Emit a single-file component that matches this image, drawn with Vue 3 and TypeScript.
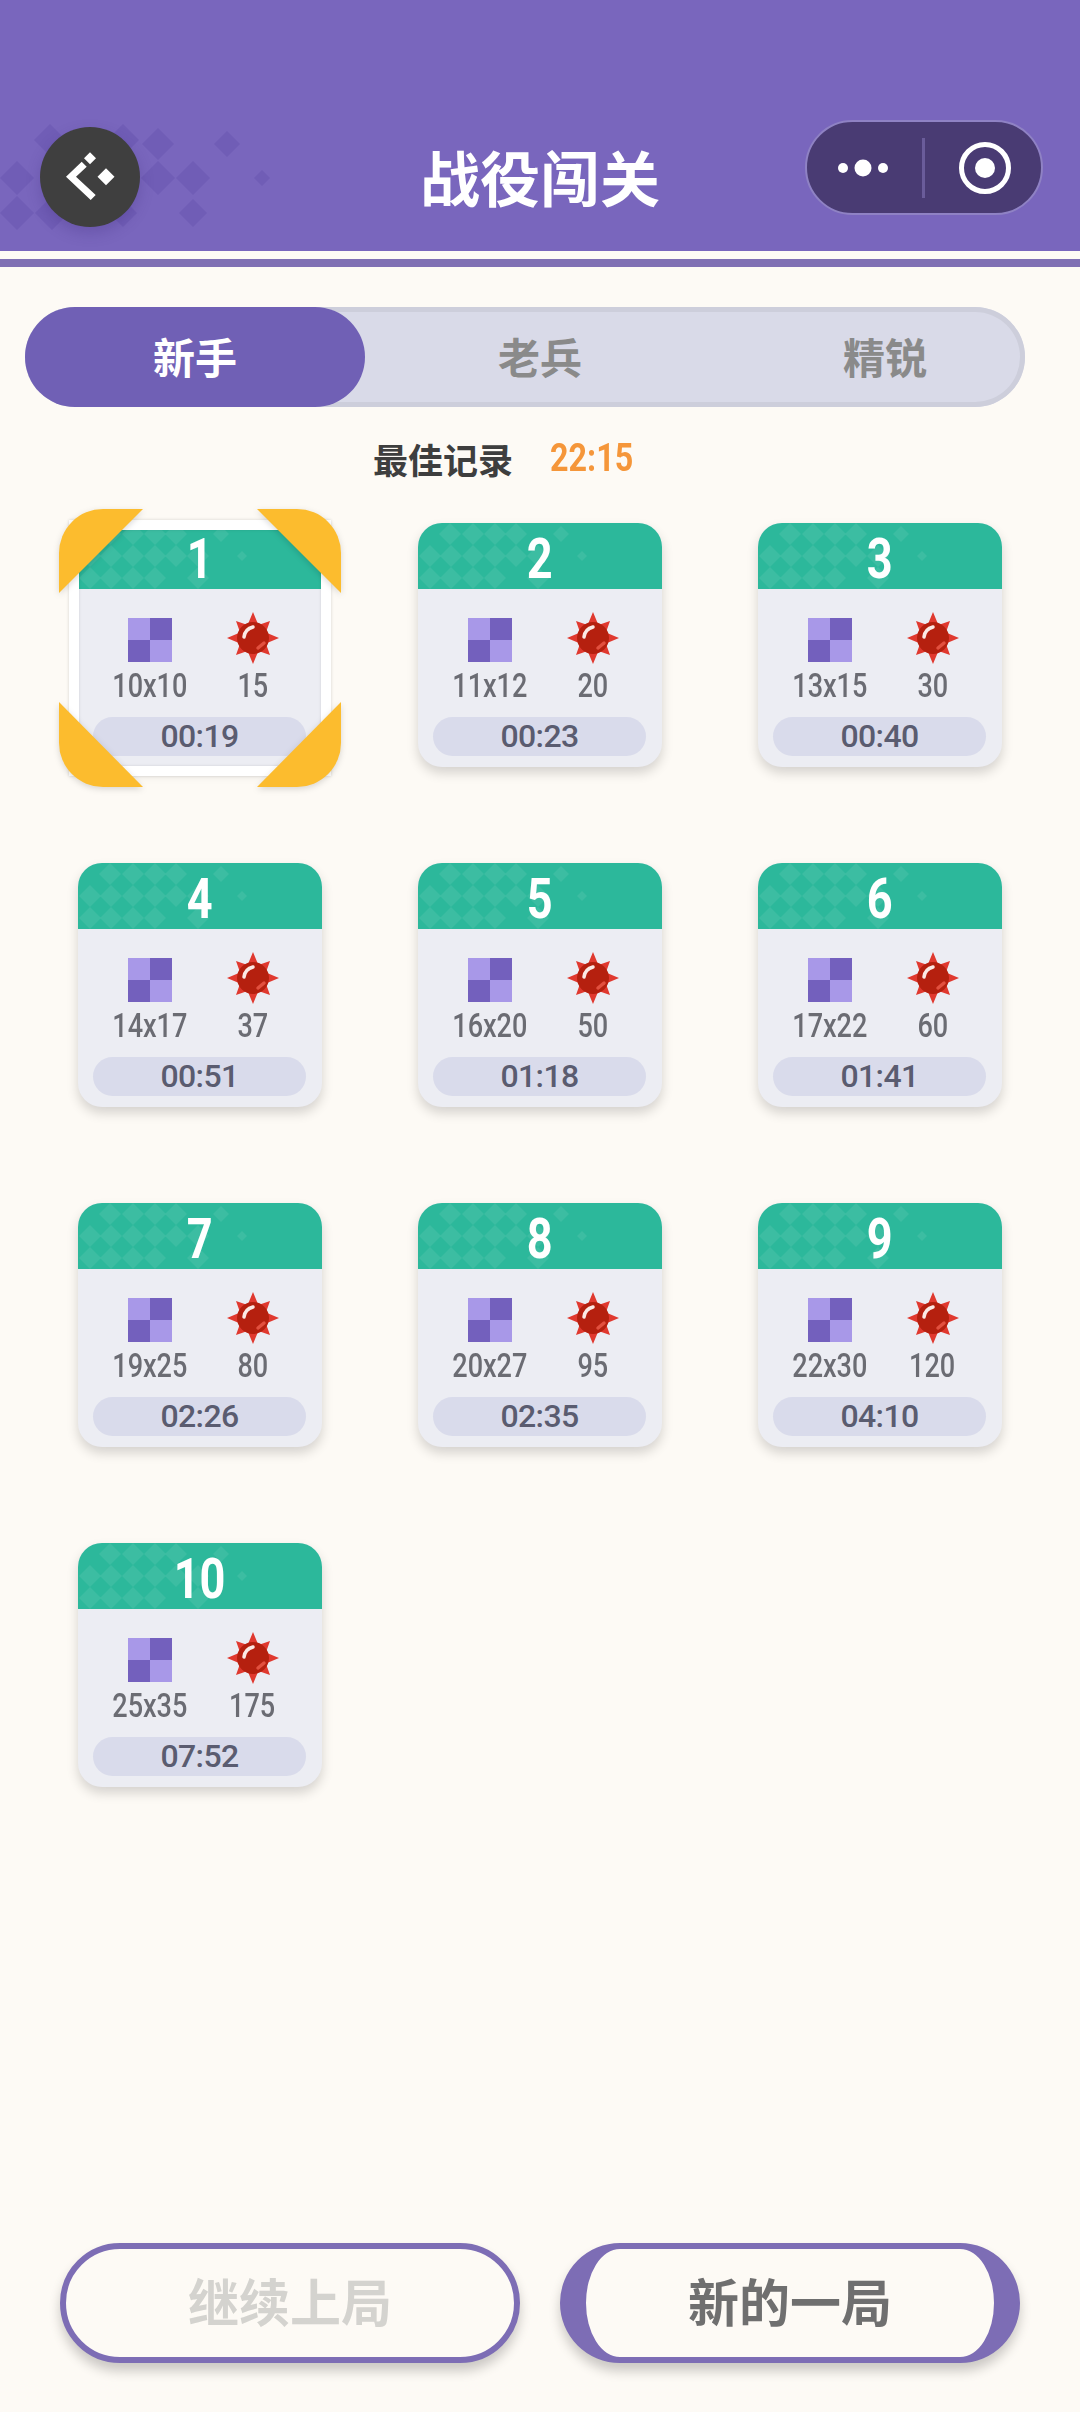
<template>
  <div class="page">
    <header class="top-bar">
      <svg class="top-pattern" width="290" height="130" viewBox="0 0 290 130">
        <polygon
          v-for="(d, i) in topDiamonds"
          :key="i"
          :points="diamond(d[0], d[1], d[2])"
          fill="#6b57b0"
          opacity="0.6"
        />
      </svg>
      <button class="back-btn">
        <svg width="100" height="100" viewBox="0 0 100 100">
          <polygon points="26,49.7 41.7,34.7 46.7,39.7 36,49.7 55.7,68 50.7,73" fill="#fff" />
          <polygon :points="diamond(50, 31.3, 6)" fill="#fff" />
          <polygon :points="diamond(66, 49.7, 8.5)" fill="#fff" />
        </svg>
      </button>
      <h1 class="title">战役闯关</h1>
      <div class="capsule">
        <svg width="80" height="30" viewBox="0 0 80 30">
          <circle cx="17" cy="15" r="5" fill="#fff" />
          <circle cx="37" cy="15" r="8.5" fill="#fff" />
          <circle cx="57" cy="15" r="5" fill="#fff" />
        </svg>
        <span class="capsule-line"></span>
        <svg width="54" height="54" viewBox="0 0 54 54">
          <circle cx="27" cy="27" r="23.5" fill="none" stroke="#fff" stroke-width="5" />
          <circle cx="27" cy="27" r="10" fill="#fff" />
        </svg>
      </div>
    </header>
    <div class="top-stripe"></div>

    <nav class="tabs">
      <div
        v-for="(t, i) in tabs"
        :key="t"
        :class="['tab', { active: i === current }]"
        @click="current = i"
      >
        {{ t }}
      </div>
    </nav>

    <div class="best">
      <span class="best-label">最佳记录</span>
      <span class="best-time">22:15</span>
    </div>

    <section class="levels">
      <div v-for="(lv, i) in levels" :key="lv.no" class="level">
        <div class="level-head">
          <svg class="head-pattern" width="244" height="66" viewBox="0 0 244 66">
            <polygon
              v-for="(d, k) in cardDiamonds"
              :key="k"
              :points="diamond(d[0], d[1], d[2])"
              fill="#fff"
              opacity="0.08"
            />
          </svg>
          <span class="level-no">{{ lv.no }}</span>
        </div>
        <div class="stats">
          <div class="stat">
            <svg width="44" height="44" viewBox="0 -2 44 44">
              <rect width="44" height="44" fill="#a898e8" />
              <rect x="22" width="22" height="22" fill="#7360bd" />
              <rect y="22" width="22" height="22" fill="#7360bd" />
            </svg>
            <span class="stat-text">{{ lv.size }}</span>
          </div>
          <div class="stat">
            <svg width="52" height="52" viewBox="-26 -26 52 52">
              <polygon :points="minePoints" fill="#e0392f" />
              <circle r="16" fill="#b5200f" />
              <path d="M-9 -1 Q-8 -9 0 -11" fill="none" stroke="#fbe9e4" stroke-width="3.5" stroke-linecap="round" />
              <path d="M5 10 L11 5" fill="none" stroke="#e2503f" stroke-width="3.5" stroke-linecap="round" />
            </svg>
            <span class="stat-text">{{ lv.mines }}</span>
          </div>
        </div>
        <div class="level-time">{{ lv.time }}</div>

        <template v-if="i === 0">
          <div class="picked-ring"></div>
          <svg class="picked-corners" width="282" height="278" viewBox="0 0 282 278">
            <path d="M0 84 V44 A44 44 0 0 1 44 0 H84 Z" fill="#fcbc2e" />
            <path d="M198 0 H238 A44 44 0 0 1 282 44 V84 Z" fill="#fcbc2e" />
            <path d="M0 193 L84 278 H44 A44 44 0 0 1 0 234 Z" fill="#fcbc2e" />
            <path d="M282 193 V234 A44 44 0 0 1 238 278 H198 Z" fill="#fcbc2e" />
          </svg>
        </template>
      </div>
    </section>

    <footer class="actions">
      <button class="action resume"><span>继续上局</span></button>
      <button class="action fresh"><span>新的一局</span></button>
    </footer>
  </div>
</template>

<script setup lang="ts">
import { ref } from 'vue'

const tabs = ['新手', '老兵', '精锐']
const current = ref(0)

const levels = [
  { no: 1, size: '10x10', mines: 15, time: '00:19' },
  { no: 2, size: '11x12', mines: 20, time: '00:23' },
  { no: 3, size: '13x15', mines: 30, time: '00:40' },
  { no: 4, size: '14x17', mines: 37, time: '00:51' },
  { no: 5, size: '16x20', mines: 50, time: '01:18' },
  { no: 6, size: '17x22', mines: 60, time: '01:41' },
  { no: 7, size: '19x25', mines: 80, time: '02:26' },
  { no: 8, size: '20x27', mines: 95, time: '02:35' },
  { no: 9, size: '22x30', mines: 120, time: '04:10' },
  { no: 10, size: '25x35', mines: 175, time: '07:52' },
]

const diamond = (x: number, y: number, r: number) =>
  `${x},${y - r} ${x + r},${y} ${x},${y + r} ${x - r},${y}`

// x, y, half size. coordinates start at the top of the screen bar pattern
const topDiamonds = [
  [50, 30, 16], [123, 30, 16], [158, 34, 16], [227, 34, 13],
  [17, 68, 17], [88, 68, 17], [158, 68, 17], [193, 68, 17], [262, 68, 8],
  [17, 103, 17], [52, 103, 17], [123, 103, 14], [193, 103, 14],
]

const cardDiamonds = [
  [32, 11, 11], [55, 11, 11], [77, 11, 11], [98, 11, 11], [143, 11, 8],
  [12, 33, 11], [33, 33, 11], [55, 33, 11], [77, 33, 11], [98, 33, 11], [120, 33, 11], [164, 33, 5],
  [12, 55, 11], [33, 55, 11], [55, 55, 11], [77, 55, 11], [120, 55, 11],
]

// 8 spikes, the straight ones a bit longer than the diagonal ones
const minePoints = Array.from({ length: 16 }, (_, i) => {
  const a = (i * Math.PI) / 8
  const r = i % 2 ? 14 : i % 4 === 0 ? 26 : 24
  return `${(Math.cos(a) * r).toFixed(1)},${(Math.sin(a) * r).toFixed(1)}`
}).join(' ')
</script>

<style>
html,
body {
  background: #fdfaf5;
}
</style>

<style scoped>
.page {
  width: 1080px;
  height: 2412px;
  display: flex;
  flex-direction: column;
  background: #fdfaf5;
  font-family: "Noto Sans CJK SC", "Noto Sans", sans-serif;
  overflow: hidden;
}

.top-bar {
  position: relative;
  height: 251px;
  flex: none;
  box-sizing: border-box;
  padding: 120px 37px 0 40px;
  display: flex;
  align-items: flex-start;
  justify-content: space-between;
  background: #7966bd;
}

.top-pattern {
  position: absolute;
  left: 0;
  top: 110px;
}

.back-btn {
  position: relative;
  width: 100px;
  height: 100px;
  margin-top: 7px;
  padding: 0;
  border: none;
  border-radius: 50%;
  background: #3f3f3f;
  box-shadow: 0 6px 14px rgba(60, 40, 120, 0.25);
}

.back-btn svg {
  display: block;
}

.title {
  position: absolute;
  left: 0;
  right: 0;
  top: 133px;
  margin: 0;
  text-align: center;
  color: #fff;
  font-size: 60px;
  line-height: 86px;
  font-weight: 700;
}

.capsule {
  width: 238px;
  height: 95px;
  box-sizing: border-box;
  display: flex;
  align-items: center;
  padding-left: 19px;
  border: 2px solid #8f82c4;
  border-radius: 48px;
  background: #493b73;
}

.capsule-line {
  width: 3px;
  height: 60px;
  margin: 0 33px 0 16px;
  background: #6a5c9a;
}

.top-stripe {
  height: 8px;
  flex: none;
  margin-top: 8px;
  background: #8070b4;
}

.tabs {
  width: 1000px;
  height: 100px;
  flex: none;
  margin: 40px 0 0 25px;
  display: flex;
  gap: 5px;
  border-radius: 50px;
  background: #d9dae8;
  box-shadow: inset 0 0 0 5px #cdcedb;
}

.tab {
  width: 340px;
  flex: none;
  box-sizing: border-box;
  padding-bottom: 3px;
  display: flex;
  align-items: center;
  justify-content: center;
  border-radius: 50px;
  color: #8a8a8a;
  font-size: 42px;
  font-weight: 700;
}

.tab:last-child {
  margin-right: -30px;
}

.tab.active {
  background: #7060b5;
  color: #fff;
}

.best {
  height: 50px;
  flex: none;
  margin-top: 26px;
  padding-left: 373px;
  display: flex;
  align-items: center;
  gap: 37px;
}

.best-label {
  font-size: 35px;
  font-weight: 700;
  color: #3e3e3e;
}

.best-time {
  font-family: Roboto, sans-serif;
  font-size: 38px;
  font-weight: 700;
  color: #f5963a;
  transform: scaleX(0.85);
  transform-origin: left center;
}

.levels {
  margin-top: 40px;
  padding-left: 78px;
  display: grid;
  grid-template-columns: repeat(3, 244px);
  grid-auto-rows: 244px;
  gap: 96px;
}

.level {
  position: relative;
  border-radius: 24px;
  background: #ecedf3;
  box-shadow: 0 6px 12px rgba(0, 0, 0, 0.16);
}

.level-head {
  position: relative;
  height: 66px;
  box-sizing: border-box;
  padding-top: 6px;
  display: flex;
  align-items: center;
  justify-content: center;
  border-radius: 24px 24px 0 0;
  background: #2cb89b;
}

.head-pattern {
  position: absolute;
  left: 0;
  top: 0;
  border-radius: 24px 24px 0 0;
}

.level-no {
  position: relative;
  color: #fff;
  font-family: Roboto, sans-serif;
  font-size: 55px;
  font-weight: 700;
  line-height: 60px;
  transform: scaleX(0.82);
}

.stats {
  height: 124px;
  box-sizing: border-box;
  padding: 23px 0 0 20px;
  display: grid;
  grid-template-columns: 103px 103px;
}

.stat {
  display: flex;
  flex-direction: column;
  align-items: center;
  color: #6b6c73;
  font-family: Roboto, sans-serif;
  font-size: 33px;
  font-weight: 500;
  line-height: 38px;
}

.stat svg {
  height: 52px;
  flex: none;
  margin-bottom: 3px;
}

.stat-text {
  transform: scaleX(0.82);
}

.level-time {
  height: 39px;
  margin: 4px 16px 0 15px;
  border-radius: 20px;
  background: #d9dbeb;
  color: #5a5c70;
  text-align: center;
  font-family: Roboto, sans-serif;
  font-size: 32px;
  font-weight: 500;
  letter-spacing: -0.6px;
  line-height: 39px;
}

.picked-ring {
  position: absolute;
  left: -9px;
  top: -3px;
  width: 262px;
  height: 256px;
  box-sizing: border-box;
  border: 10px solid #fff;
  box-shadow: 0 0 3px rgba(0, 0, 0, 0.15), inset 0 0 3px rgba(0, 0, 0, 0.12);
}

.picked-corners {
  position: absolute;
  left: -19px;
  top: -14px;
  filter: drop-shadow(0 2px 3px rgba(0, 0, 0, 0.15));
}

.actions {
  margin-top: auto;
  padding: 0 60px 49px;
  display: flex;
  justify-content: space-between;
}

.action {
  width: 460px;
  height: 120px;
  box-sizing: border-box;
  padding: 0 0 7px;
  border-style: solid;
  border-color: #7d6db5;
  border-radius: 60px;
  background: #fdfaf5;
  font-family: inherit;
  font-size: 51px;
  font-weight: 700;
  box-shadow: 0 8px 12px rgba(0, 0, 0, 0.2);
}

.resume {
  border-width: 6px;
  color: #d4d3cf;
}

.fresh {
  border-width: 6px 26px;
  color: #6f6f6f;
}
</style>
